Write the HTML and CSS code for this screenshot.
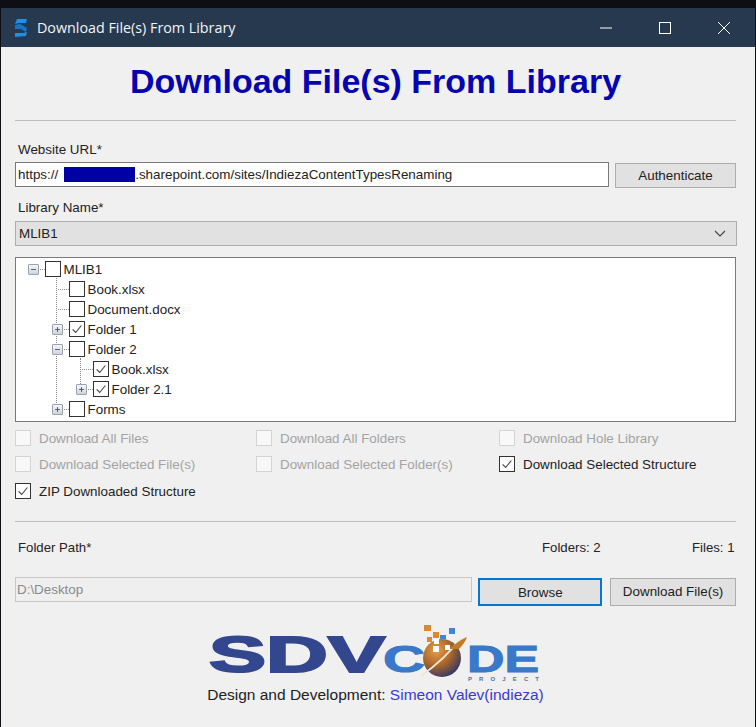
FILE: index.html
```html
<!DOCTYPE html>
<html lang="en">
<head>
    <meta charset="UTF-8">
    <meta name="viewport" content="width=device-width, initial-scale=1.0">
    <title>Download File(s) From Library</title>
    <link rel="stylesheet" href="styles.css">
</head>
<body>
  <svg class="defs" width="0" height="0">
    <symbol id="tick" viewBox="0 0 16 16"><path d="M3 8.5 6.5 12 13 4" fill="none" stroke="#444" stroke-width="1.3"/></symbol>
    <symbol id="plus" viewBox="0 0 11 11"><path d="M2.5 5.5h6M5.5 2.5v6" stroke="#33465e" stroke-width="1"/></symbol>
    <symbol id="minus" viewBox="0 0 11 11"><path d="M2.5 5.5h6" stroke="#33465e" stroke-width="1"/></symbol>
  </svg>

  <div class="window">
    <div class="titlebar">
      <svg class="app-icon" width="14" height="18" viewBox="0 0 14 18">
        <polygon points="3,0 13,0 12,4 5,4 1,5" fill="#1f8fe8"/>
        <polygon points="1,6 6,5 13,9 12,13 7,10 1,10" fill="#1675c9"/>
        <polygon points="1,14 9,14 13,13 12,17 1,18" fill="#1f8fe8"/>
      </svg>
      <span class="title-text">Download File(s) From Library</span>
      <div class="win-buttons">
        <svg width="12" height="12" viewBox="0 0 12 12"><path d="M0 6h12" stroke="#fff"/></svg>
        <svg width="12" height="12" viewBox="0 0 12 12"><rect x=".5" y=".5" width="11" height="11" fill="none" stroke="#fff"/></svg>
        <svg width="12" height="12" viewBox="0 0 12 12"><path d="M0 0 12 12M12 0 0 12" stroke="#fff"/></svg>
      </div>
    </div>

    <div class="content">
      <h1>Download File(s) From Library</h1>
      <div class="rule"></div>

      <div class="label url-label">Website URL*</div>
      <div class="url-row">
        <div class="textbox url-box">https://<span class="redacted"></span>.sharepoint.com/sites/IndiezaContentTypesRenaming</div>
        <div class="btn auth-btn">Authenticate</div>
      </div>

      <div class="label lib-label">Library Name*</div>
      <div class="select">
        <span>MLIB1</span>
        <svg width="12" height="7" viewBox="0 0 12 7"><path d="M1 1 6 6 11 1" fill="none" stroke="#444" stroke-width="1.2"/></svg>
      </div>

      <div class="tree">
        <i class="guide guide-1"></i>
        <i class="guide guide-2"></i>
        <div class="node lvl-0">
          <span class="stub"><svg class="exp"><use href="#minus"/></svg></span><span class="box"></span><span>MLIB1</span>
        </div>
        <div class="node lvl-1">
          <span class="stub"></span><span class="box"></span><span>Book.xlsx</span>
        </div>
        <div class="node lvl-1">
          <span class="stub"></span><span class="box"></span><span>Document.docx</span>
        </div>
        <div class="node lvl-1">
          <span class="stub"><svg class="exp"><use href="#plus"/></svg></span><span class="box"><svg><use href="#tick"/></svg></span><span>Folder 1</span>
        </div>
        <div class="node lvl-1">
          <span class="stub"><svg class="exp"><use href="#minus"/></svg></span><span class="box"></span><span>Folder 2</span>
        </div>
        <div class="node lvl-2">
          <span class="stub"></span><span class="box"><svg><use href="#tick"/></svg></span><span>Book.xlsx</span>
        </div>
        <div class="node lvl-2">
          <span class="stub"><svg class="exp"><use href="#plus"/></svg></span><span class="box"><svg><use href="#tick"/></svg></span><span>Folder 2.1</span>
        </div>
        <div class="node lvl-1">
          <span class="stub"><svg class="exp"><use href="#plus"/></svg></span><span class="box"></span><span>Forms</span>
        </div>
      </div>

      <div class="options">
        <div class="option off"><span class="box"></span>Download All Files</div>
        <div class="option off"><span class="box"></span>Download All Folders</div>
        <div class="option off"><span class="box"></span>Download Hole Library</div>
        <div class="option off"><span class="box"></span>Download Selected File(s)</div>
        <div class="option off"><span class="box"></span>Download Selected Folder(s)</div>
        <div class="option"><span class="box"><svg><use href="#tick"/></svg></span>Download Selected Structure</div>
        <div class="option zip"><span class="box"><svg><use href="#tick"/></svg></span>ZIP Downloaded Structure</div>
      </div>

      <div class="rule rule-2"></div>

      <div class="path-info">
        <span class="label path-label">Folder Path*</span>
        <span class="count-folders">Folders: 2</span>
        <span class="count-files">Files: 1</span>
      </div>

      <div class="path-row">
        <div class="textbox path-box">D:\Desktop</div>
        <div class="btn browse-btn">Browse</div>
        <div class="btn dl-btn">Download File(s)</div>
      </div>

      <svg class="logo" width="340" height="60" viewBox="0 0 340 60">
        <text class="logo-sdv" x="0" y="47" textLength="176" lengthAdjust="spacingAndGlyphs">SDV</text>
        <text class="logo-code" x="174" y="47" textLength="42" lengthAdjust="spacingAndGlyphs">C</text>
        <text class="logo-code" x="258" y="47" textLength="72" lengthAdjust="spacingAndGlyphs">DE</text>
        <text class="logo-project" x="259" y="56" textLength="71">PROJECT</text>
        <circle cx="233" cy="33" r="19" fill="url(#globe)"/>
        <path d="M212 51 Q236 34 252 13" fill="none" stroke="#f1e6d6" stroke-width="2"/>
        <path d="M240 24 Q252 14 258 12 Q256 18 250 24" fill="#c27a26"/>
        <g fill="#d98a2c">
          <rect x="215" y="0" width="7" height="6"/><rect x="224" y="7" width="6" height="6"/><rect x="218" y="12" width="5" height="5"/>
        </g>
        <g fill="#3f86d8">
          <rect x="240" y="3" width="6" height="6"/><rect x="231" y="10" width="6" height="4"/>
        </g>
        <g fill="#fff">
          <rect x="224" y="21" width="6" height="6"/><rect x="236" y="20" width="5" height="5"/><rect x="225" y="14" width="5" height="5"/>
        </g>
        <defs>
          <radialGradient id="globe" cx=".35" cy=".3" r=".8">
            <stop offset="0" stop-color="#e9a04a"/>
            <stop offset=".5" stop-color="#a8662a"/>
            <stop offset="1" stop-color="#27306f"/>
          </radialGradient>
        </defs>
      </svg>

      <div class="credits">Design and Development: <span class="author">Simeon Valev(indieza)</span></div>
    </div>
  </div>
</body>
</html>
```

FILE: styles.css
```css
html, body {
    height: 100%;
}

body {
    margin: 0;
    padding-top: 8px;
    box-sizing: border-box;
    background-color: #0e0f14;
    font-family: "Liberation Sans", Arial, sans-serif;
    font-size: 13.4px;
    color: #222;
    overflow: hidden;
}

.defs {
    display: block;
    height: 0;
}

.window {
    margin: 0 1px;
    height: 719px;
    background-color: #f0f0f0;
}

.titlebar {
    height: 39px;
    background-color: #26394f;
    display: flex;
    align-items: center;
    padding-left: 13px;
    color: #f2f4f6;
}

.app-icon {
    margin-right: 9px;
}

.title-text {
    font-family: "Open Sans", sans-serif;
    font-size: 14.3px;
}

.win-buttons {
    margin-left: auto;
    display: flex;
    gap: 47px;
    padding-right: 25px;
}

.content {
    padding: 0 19px 0 14px;
}

h1 {
    margin: 0;
    height: 73px;
    line-height: 69px;
    font-size: 34px;
    font-weight: bold;
    text-align: center;
    color: #0505b0;
}

.rule {
    height: 1px;
    background-color: #bdbdbd;
}

.label {
    height: 16px;
    line-height: 16px;
    padding-left: 3px;
}

.url-label {
    margin-top: 21px;
}

.url-row {
    margin-top: 4px;
    display: flex;
    gap: 6px;
    align-items: flex-start;
}

.textbox {
    box-sizing: border-box;
    height: 25px;
    line-height: 24px;
    padding-left: 2px;
    border: 1px solid #7a7a7a;
    background-color: #fff;
}

.url-box {
    width: 594px;
}

.redacted {
    display: inline-block;
    width: 71px;
    height: 15px;
    margin-left: 6px;
    vertical-align: -3px;
    background-color: #0000a5;
}

.btn {
    box-sizing: border-box;
    height: 25px;
    line-height: 23px;
    text-align: center;
    border: 1px solid #adadad;
    background-color: #e1e1e1;
}

.auth-btn {
    width: 121px;
    margin-top: 1px;
}

.lib-label {
    margin-top: 12px;
}

.select {
    margin-top: 5px;
    box-sizing: border-box;
    height: 25px;
    width: 722px;
    padding: 0 10px 0 3px;
    display: flex;
    justify-content: space-between;
    align-items: center;
    border: 1px solid #adadad;
    background-color: #e1e1e1;
}

.tree {
    position: relative;
    margin-top: 11px;
    box-sizing: border-box;
    height: 165px;
    width: 721px;
    padding-top: 1px;
    border: 1px solid #7a7a7a;
    background-color: #fff;
}

/* dotted tree lines run across rows */
.guide {
    position: absolute;
    width: 0;
    border-left: 1px dotted #8a8a8a;
}

.guide-1 {
    left: 40px;
    top: 20px;
    height: 127px;
}

.guide-2 {
    left: 64px;
    top: 100px;
    height: 28px;
}

.node {
    height: 20px;
    display: flex;
    align-items: center;
}

.lvl-0 { padding-left: 12px; }
.lvl-1 { padding-left: 36px; }
.lvl-2 { padding-left: 60px; }

.stub {
    position: relative;
    width: 17px;
    height: 11px;
    flex: none;
}

.stub::before {
    content: "";
    position: absolute;
    left: 6px;
    right: 0;
    top: 5px;
    border-top: 1px dotted #8a8a8a;
}

.exp {
    position: absolute;
    left: 0;
    top: 0;
    width: 11px;
    height: 11px;
    box-sizing: border-box;
    border: 1px solid #9aa3ad;
    border-radius: 1px;
    background: linear-gradient(#f6f7f9, #cfd5dc);
}

.box {
    flex: none;
    box-sizing: border-box;
    display: block;
    width: 16px;
    height: 16px;
    border: 1px solid #333;
    background-color: #fff;
}

.box svg {
    display: block;
    width: 14px;
    height: 14px;
}

.node .box {
    margin-right: 2.5px;
}

.options {
    margin-top: 7px;
    display: grid;
    grid-template-columns: 241px 243px auto;
    row-gap: 8px;
}

.option {
    display: flex;
    align-items: center;
    gap: 8px;
    height: 18px;
}

.off {
    color: #a3a3a3;
}

.off .box {
    border-color: #d4d4d4;
    background-color: #f8f8f8;
}

.zip {
    margin-top: 1px;
}

.rule-2 {
    margin-top: 21px;
}

.path-info {
    margin-top: 18px;
    display: flex;
    height: 16px;
    line-height: 16px;
    font-size: 13.2px;
    white-space: nowrap;
}

.path-label {
    flex: 1;
}

.count-folders {
    width: 150px;
}

.count-files {
    width: 44px;
}

.path-row {
    margin-top: 21px;
    display: flex;
    align-items: flex-start;
}

.path-box {
    width: 458px;
    padding-left: 1px;
    color: #8a8a8a;
    background-color: #efefef;
    border-color: #c8c8c8;
}

.browse-btn {
    width: 124px;
    height: 28px;
    line-height: 26px;
    margin: 1px 0 0 6px;
    border: 2px solid #0078d7;
}

.dl-btn {
    width: 126px;
    height: 28px;
    line-height: 26px;
    margin: 1px 0 0 8px;
}

.logo {
    display: block;
    margin: 19px 0 0 194px;
}

.logo-sdv {
    font-family: "Liberation Sans", sans-serif;
    font-weight: bold;
    font-size: 50px;
    fill: #33478f;
    stroke: #33478f;
    stroke-width: 2px;
}

.logo-code {
    font-family: "Liberation Sans", sans-serif;
    font-weight: bold;
    font-size: 37px;
    fill: #3a78c9;
    stroke: #3a78c9;
    stroke-width: 1px;
}

.logo-project {
    font-family: "Liberation Sans", sans-serif;
    font-weight: bold;
    font-size: 6px;
    fill: #5a6f9a;
}

.credits {
    margin-top: 1px;
    text-align: center;
    font-size: 15.5px;
    color: #222;
}

.author {
    color: #3a3ad0;
}
```
